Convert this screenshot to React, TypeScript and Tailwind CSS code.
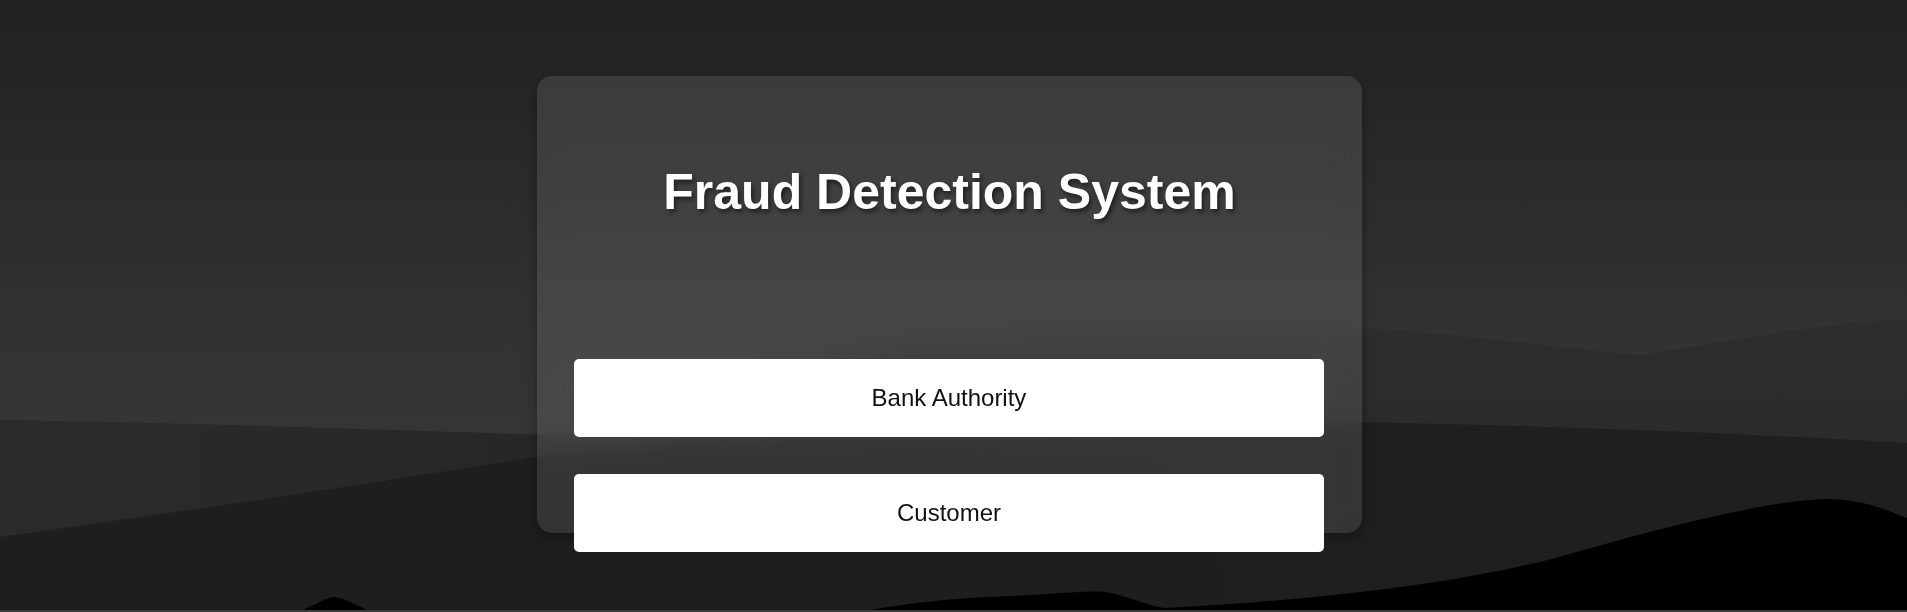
import React from "react";

function Landscape() {
  return (
    <svg
      className="absolute inset-0 w-full h-full"
      viewBox="0 0 1907 612"
      preserveAspectRatio="none"
      aria-hidden="true"
    >
      <defs>
        <linearGradient id="sky" x1="0" y1="0" x2="0" y2="1">
          <stop offset="0" stopColor="#212121" />
          <stop offset="0.5" stopColor="#313131" />
          <stop offset="0.7" stopColor="#353535" />
        </linearGradient>
        <linearGradient id="hill1" x1="0" y1="0" x2="0" y2="1">
          <stop offset="0" stopColor="#2d2d2d" />
          <stop offset="1" stopColor="#282828" />
        </linearGradient>
        <linearGradient id="hill2" x1="0" y1="0" x2="1" y2="0">
          <stop offset="0" stopColor="#2b2b2b" />
          <stop offset="0.4" stopColor="#252525" />
          <stop offset="0.6" stopColor="#1f1f1f" />
          <stop offset="1" stopColor="#1f1f1f" />
        </linearGradient>
      </defs>
      <rect x="0" y="0" width="1907" height="612" fill="url(#sky)" />
      <path
        d="M0,612 L0,460 C300,458 520,452 600,446 C700,420 780,350 880,336 C1050,318 1250,322 1361,328 C1480,336 1580,350 1642,355 C1740,338 1840,322 1907,319 L1907,612 Z"
        fill="url(#hill1)"
      />
      <path
        d="M0,420 C250,424 450,432 640,438 C850,432 1100,418 1361,422 C1600,427 1800,436 1907,443 L1907,612 L0,612 Z"
        fill="url(#hill2)"
      />
      <path
        d="M0,537 C180,512 380,482 537,457 C680,436 820,432 950,438 C1050,444 1100,450 1150,460 C1200,480 1220,540 1230,612 L0,612 Z"
        fill="#1e1e1e"
      />
      <path
        d="M860,612 C900,604 950,598 1010,596 C1055,594 1090,590 1106,592 C1128,596 1148,606 1165,608 C1300,601 1450,586 1559,557 C1680,522 1780,499 1829,499 C1862,500 1882,508 1907,518 L1907,612 Z"
        fill="#000000"
      />
      <path d="M300,612 C315,604 326,598 334,597 C344,598 356,605 372,612 Z" fill="#000000" />
      <rect x="0" y="610" width="1907" height="2" fill="#3a3a3a" />
    </svg>
  );
}

export default function App() {
  return (
    <div className="relative w-full h-[612px] overflow-hidden bg-[#222222] font-['Liberation_Sans',Arial,sans-serif]">
      <Landscape />
      <div className="relative pl-[537px] pt-[76px]">
        <div className="w-[825px] h-[457px] rounded-[15px] bg-white/10 backdrop-blur-md shadow-[0_4px_12px_rgba(0,0,0,0.35)] px-[37px] flex flex-col">
          <h1 className="pt-[87px] h-[145px] text-center text-[50px] leading-[58px] font-bold text-white [text-shadow:2px_3px_5px_rgba(0,0,0,0.55)]">
            Fraud Detection System
          </h1>
          <div className="mt-[138px] flex flex-col gap-[37px] w-[750px]">
            <button className="h-[78px] w-full bg-white rounded-[5px] text-[24px] text-[#111111] flex items-center justify-center">
              Bank Authority
            </button>
            <button className="h-[78px] w-full bg-white rounded-[5px] text-[24px] text-[#111111] flex items-center justify-center">
              Customer
            </button>
          </div>
        </div>
      </div>
    </div>
  );
}
